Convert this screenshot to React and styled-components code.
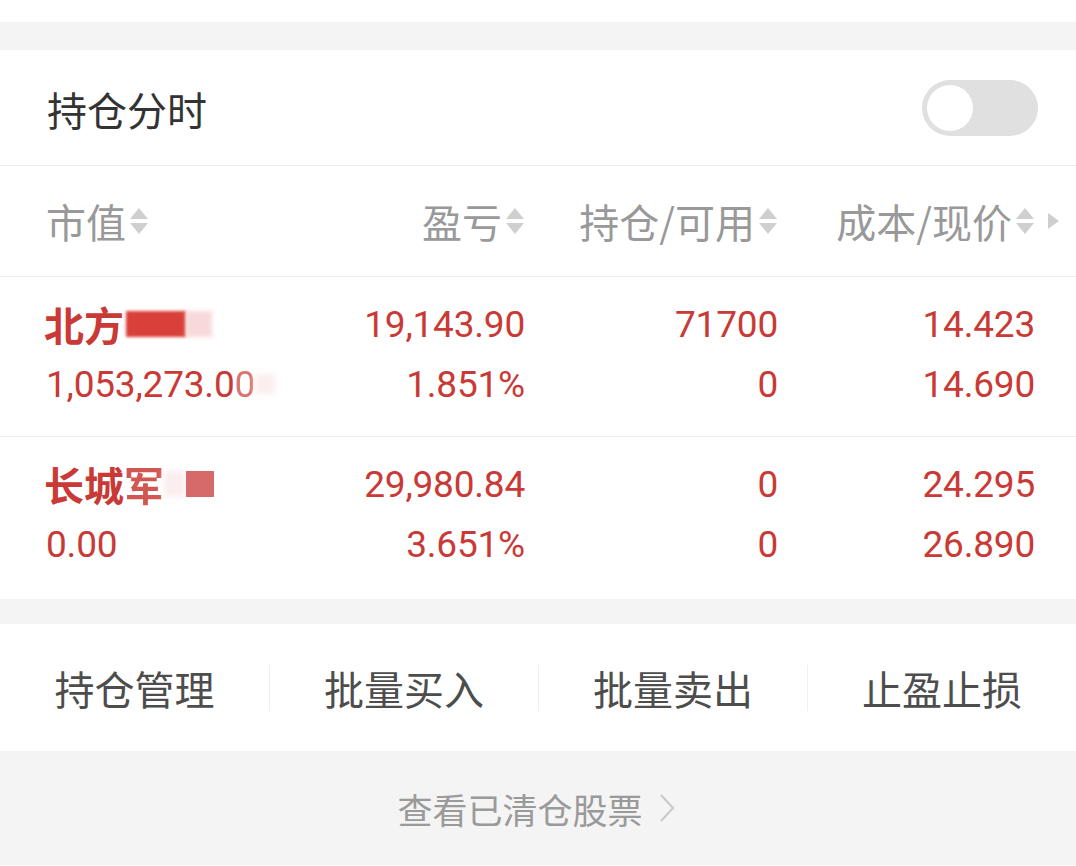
import React from 'react';
import styled, { createGlobalStyle } from 'styled-components';

const GlobalStyle = createGlobalStyle`
  html, body {
    margin: 0;
    padding: 0;
    background: #ffffff;
    font-family: Roboto, 'Noto Sans CJK SC', sans-serif;
  }
`;

const RED = '#c93a36';
const COLS = '224px 255px 253px 257px 1fr';

const Page = styled.div`
  width: 1076px;
  height: 866px;
  overflow: hidden;
  background: #ffffff;
`;

const Spacer = styled.div`
  height: ${(p) => p.h}px;
  background: ${(p) => (p.gray ? '#f4f4f4' : '#ffffff')};
`;

const TitleBar = styled.div`
  height: 116px;
  display: flex;
  align-items: center;
  justify-content: space-between;
  padding: 0 38px 0 47px;
  border-bottom: 1px solid #ededed;
  box-sizing: border-box;
`;

const Title = styled.div`
  font-family: 'Noto Sans CJK SC', sans-serif;
  font-size: 40px;
  color: #333333;
  padding-top: 2px;
`;

const Toggle = styled.div`
  width: 116px;
  height: 56px;
  border-radius: 28px;
  background: #e0e0e0;
  display: flex;
  align-items: center;
  padding: 0 5px;
  box-sizing: border-box;
`;

const Knob = styled.div`
  width: 46px;
  height: 46px;
  border-radius: 50%;
  background: #ffffff;
`;

const Row = styled.div`
  display: grid;
  grid-template-columns: ${COLS};
  padding-left: 46px;
  box-sizing: border-box;
  border-bottom: ${(p) => (p.last ? 'none' : '1px solid #efefef')};
`;

const HeadRow = styled(Row)`
  height: 111px;
  align-items: center;
`;

const HeadCell = styled.div`
  display: flex;
  align-items: center;
  justify-content: ${(p) => (p.left ? 'flex-start' : 'flex-end')};
  font-family: 'Noto Sans CJK SC', sans-serif;
  font-size: 40px;
  color: #999999;
  gap: 3px;
`;

const More = styled.div`
  display: flex;
  justify-content: center;
  padding-right: 6px;
`;

const DataRow = styled(Row)`
  padding-top: 17px;
  padding-bottom: ${(p) => (p.last ? 25 : 22)}px;
`;

const Cell = styled.div`
  display: flex;
  flex-direction: column;
  align-items: ${(p) => (p.left ? 'flex-start' : 'flex-end')};
  color: ${RED};
`;

const Line = styled.div`
  height: 60px;
  display: flex;
  align-items: center;
  font-family: ${(p) => (p.cn ? "'Noto Sans CJK SC'" : 'Roboto')}, sans-serif;
  font-size: ${(p) => (p.cn ? 40 : 37)}px;
  font-weight: ${(p) => (p.cn ? 700 : 400)};
  letter-spacing: ${(p) => (p.cn ? 0 : -0.2)}px;
  white-space: nowrap;
  margin-left: ${(p) => (p.cn ? -2 : 0)}px;
`;

const Mask = styled.span`
  display: inline-block;
  width: ${(p) => p.w}px;
  height: ${(p) => p.hgt || 26}px;
  background: ${(p) => p.c};
  filter: blur(${(p) => p.blur || 0}px);
  margin-left: ${(p) => p.ml || 0}px;
`;

const Actions = styled.div`
  height: 127px;
  display: grid;
  grid-template-columns: repeat(4, 1fr);
  align-items: center;
`;

const Action = styled.div`
  height: 46px;
  display: flex;
  align-items: center;
  justify-content: center;
  font-family: 'Noto Sans CJK SC', sans-serif;
  font-size: 40px;
  color: #4d4d4d;
  border-left: ${(p) => (p.first ? 'none' : '1px solid #f0f0f0')};
`;

const Footer = styled.div`
  height: 114px;
  background: #f4f4f4;
  display: flex;
  align-items: center;
  justify-content: center;
  gap: 16px;
  font-family: 'Noto Sans CJK SC', sans-serif;
  font-size: 35px;
  color: #9a9a9a;
  padding-right: 4px;
`;

const SortIcon = () => (
  <svg width="20" height="30" viewBox="0 0 20 30">
    <path d="M10 2 L19 13 L1 13 Z" fill="#cfcfcf" />
    <path d="M1 17 L19 17 L10 28 Z" fill="#cfcfcf" />
  </svg>
);

const headers = [
  { t: '市值', left: true },
  { t: '盈亏' },
  { t: '持仓/可用' },
  { t: '成本/现价' },
];

const rows = [
  {
    name: (
      <>
        北方
        <Mask w={60} c="#d9403a" blur={1.5} ml={2} />
        <Mask w={26} c="#f7d9d9" blur={2} />
      </>
    ),
    value: (
      <>
        1,053,273.0
        <span style={{ opacity: 0.7 }}>0</span>
        <Mask w={20} c="#fbeeee" blur={3} hgt={20} />
      </>
    ),
    pl: '19,143.90',
    pct: '1.851%',
    hold: '71700',
    avail: '0',
    cost: '14.423',
    price: '14.690',
  },
  {
    name: (
      <>
        长城<span style={{ opacity: 0.85 }}>军</span>
        <Mask w={22} c="#fbeeee" blur={3} />
        <Mask w={28} c="#d66a6a" />
      </>
    ),
    value: '0.00',
    pl: '29,980.84',
    pct: '3.651%',
    hold: '0',
    avail: '0',
    cost: '24.295',
    price: '26.890',
  },
];

export default function App() {
  return (
    <Page>
      <GlobalStyle />
      <Spacer h={22} />
      <Spacer h={28} gray />
      <TitleBar>
        <Title>持仓分时</Title>
        <Toggle>
          <Knob />
        </Toggle>
      </TitleBar>
      <HeadRow>
        {headers.map((h) => (
          <HeadCell key={h.t} left={h.left}>
            {h.t}
            <SortIcon />
          </HeadCell>
        ))}
        <More>
          <svg width="14" height="18" viewBox="0 0 14 18">
            <path d="M2 1 L13 9 L2 17 Z" fill="#cfcfcf" />
          </svg>
        </More>
      </HeadRow>
      {rows.map((r, i) => (
        <DataRow key={i} last={i === rows.length - 1}>
          <Cell left>
            <Line cn>{r.name}</Line>
            <Line>{r.value}</Line>
          </Cell>
          <Cell>
            <Line>{r.pl}</Line>
            <Line>{r.pct}</Line>
          </Cell>
          <Cell>
            <Line>{r.hold}</Line>
            <Line>{r.avail}</Line>
          </Cell>
          <Cell>
            <Line>{r.cost}</Line>
            <Line>{r.price}</Line>
          </Cell>
        </DataRow>
      ))}
      <Spacer h={25} gray />
      <Actions>
        {['持仓管理', '批量买入', '批量卖出', '止盈止损'].map((a, i) => (
          <Action key={a} first={i === 0}>
            {a}
          </Action>
        ))}
      </Actions>
      <Footer>
        查看已清仓股票
        <svg width="16" height="30" viewBox="0 0 16 30">
          <path d="M2 2 L14 15 L2 28" fill="none" stroke="#c8c8c8" strokeWidth="2" />
        </svg>
      </Footer>
    </Page>
  );
}
